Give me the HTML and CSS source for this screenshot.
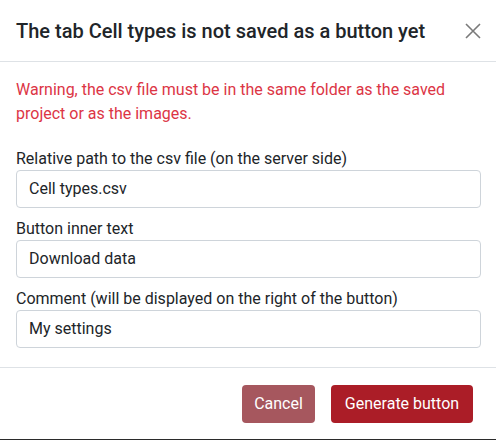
FILE: index.html
```html
<!DOCTYPE html>
<html lang="en">
<head>
<meta charset="utf-8">
<title>Modal</title>
<link rel="stylesheet" href="styles.css">
</head>
<body>
<div class="modal">
  <div class="modal-header">
    <h5 class="modal-title">The tab Cell types is not saved as a button yet</h5>
    <button class="btn-close" aria-label="Close">
      <svg viewBox="0 0 16 16" width="16" height="16"><path d="M1 1L15 15M15 1L1 15" stroke="#7a7a7a" stroke-width="1.6" fill="none"/></svg>
    </button>
  </div>
  <div class="modal-body">
    <p class="warning">Warning, the csv file must be in the same folder as the saved project or as the images.</p>
    <div class="field">
      <label class="label">Relative path to the csv file (on the server side)</label>
      <div class="input">Cell types.csv</div>
    </div>
    <div class="field">
      <label class="label">Button inner text</label>
      <div class="input">Download data</div>
    </div>
    <div class="field">
      <label class="label">Comment (will be displayed on the right of the button)</label>
      <div class="input">My settings</div>
    </div>
  </div>
  <div class="modal-footer">
    <button class="btn btn-cancel">Cancel</button>
    <button class="btn btn-primary">Generate button</button>
  </div>
</div>
<div class="backdrop-edge"></div>
</body>
</html>
```
FILE: styles.css
```css
html, body {
  margin: 0;
  padding: 0;
  background: #ffffff;
}
body {
  font-family: Roboto, "Liberation Sans", sans-serif;
  color: #212529;
  font-size: 16px;
  line-height: 24px;
  height: 440px;
  overflow: hidden;
}
.modal {
  background: #fff;
  height: 439px;
  display: flex;
  flex-direction: column;
}
.modal-header {
  display: flex;
  align-items: center;
  padding: 16px 15px 15px 16px;
  border-bottom: 1px solid #dee2e6;
  height: 30px;
}
.modal-title {
  margin: 0;
  font-size: 20px;
  line-height: 30px;
  font-weight: 500;
  color: #212529;
  flex: 1;
}
.btn-close {
  border: 0;
  background: transparent;
  padding: 0;
  width: 16px;
  height: 16px;
  display: flex;
}
.modal-body {
  padding: 16px 15px 0 16px;
  display: flex;
  flex-direction: column;
  gap: 8px;
}
.warning {
  margin: 0 0 12px;
  color: #dc3545;
}
.field {
  display: flex;
  flex-direction: column;
}
.label {
  display: block;
  padding-top: 1px;
  height: 23px;
}
.input {
  height: 36px;
  border: 1px solid #ced4da;
  border-radius: 4px;
  padding: 0 12px;
  line-height: 36px;
  color: #212529;
}
.modal-footer {
  margin-top: 19px;
  border-top: 1px solid #dee2e6;
  display: flex;
  justify-content: flex-end;
  gap: 16px;
  padding: 17px 23px 0 0;
}
.btn {
  font-family: inherit;
  font-size: 16px;
  line-height: 24px;
  height: 38px;
  border: 0;
  border-radius: 4px;
  color: #fff;
  padding: 0 12px;
}
.btn-cancel {
  background: #a6575e;
  width: 73px;
}
.btn-primary {
  background: #ab1d27;
  width: 142px;
}
.backdrop-edge {
  height: 1px;
  background: #2b2b2b;
}
```
